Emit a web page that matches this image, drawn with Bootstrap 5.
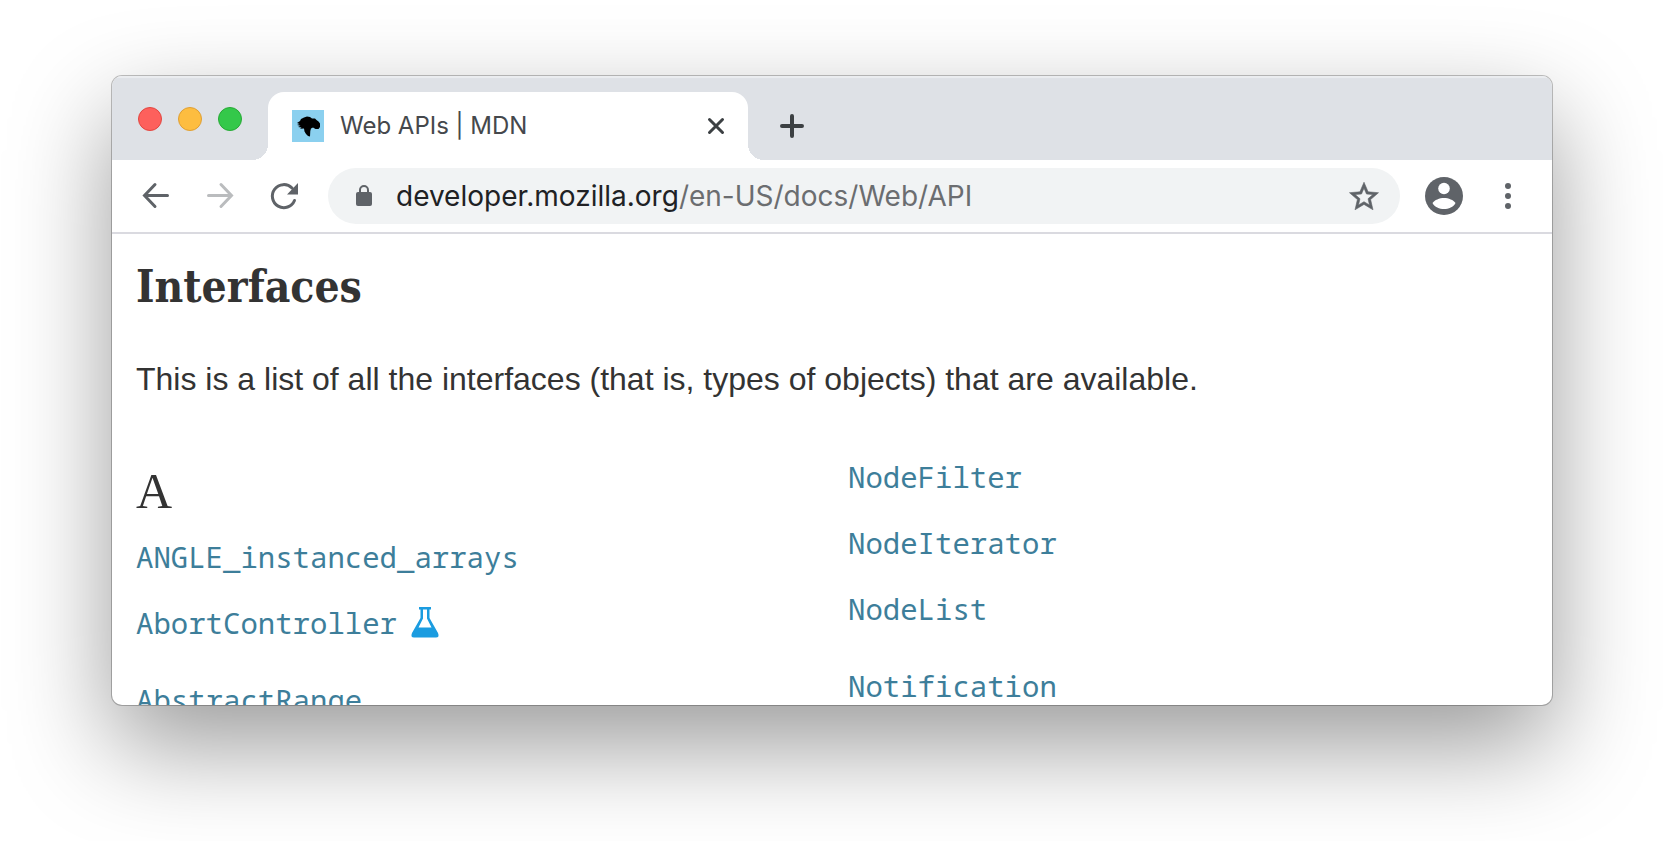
<!DOCTYPE html>
<html lang="en">
<head>
<meta charset="utf-8">
<meta name="viewport" content="width=device-width, initial-scale=1">
<title>Web APIs | MDN</title>
<link rel="stylesheet" href="https://cdn.jsdelivr.net/npm/bootstrap@5.3.0/dist/css/bootstrap.min.css">
<style>
  body { background: #fff; color: #333; }
  .browser {
    height: calc(100vh - 212px);
    margin: 76px 112px 136px;
    border-radius: 10px;
    box-shadow: 0 0 0 1px rgba(0,0,0,.24), 0 40px 100px rgba(0,0,0,.4);
  }
  .browser svg { display: block; flex: none; }

  /* Tab strip */
  .tab-strip { height: 84px; background: #dee1e6; box-shadow: inset 0 2px 1px rgba(255,255,255,.4); padding-left: 26px; }
  .lights { gap: 16px; padding-top: 31px; margin-right: 26px; }
  .light { width: 24px; height: 24px; border-radius: 50%; border: 1px solid; padding: 0; }
  .light-close { background: #fd605c; border-color: #e24640; }
  .light-min { background: #fdbd40; border-color: #df9f34; }
  .light-max { background: #34c84a; border-color: #27aa35; }
  .tab-item {
    width: 480px; margin-top: 16px; padding: 0 22px 0 24px;
    background: #fff; border-radius: 16px 16px 0 0; position: relative;
  }
  .tab-item::before, .tab-item::after {
    content: ""; position: absolute; bottom: 0; width: 16px; height: 16px;
  }
  .tab-item::before { right: 100%; background: radial-gradient(circle at 0 0, transparent 16px, #fff 16px); }
  .tab-item::after { left: 100%; background: radial-gradient(circle at 100% 0, transparent 16px, #fff 16px); }
  .tab-title { font: 24px/32px Inter, sans-serif; color: #45484c; margin-left: 16px; }
  .icon-btn { border: 0; background: none; padding: 0; color: #5f6368; display: block; }
  .new-tab { margin: 16px 0 0 28px; color: #3c4043; }

  /* Toolbar */
  .toolbar { height: 74px; border-bottom: 2px solid #dadae0; padding: 0 28px; }
  .nav-buttons { gap: 32px; margin-right: 28px; }
  .omnibox { height: 56px; border-radius: 28px; background: #f1f3f4; padding: 0 20px 0 28px; margin-right: 24px; }
  .url { font: 28px/40px Inter, sans-serif; color: #202124; }
  .url-path { border: 0; outline: 0; padding: 0; background: none; color: #6b6d70; min-width: 0; }
  .profile { margin-right: 28px; }

  /* Page content */
  .page { padding: 23px 24px 0; }
  .page h1 { font: bold 44px/60px "DejaVu Serif Condensed", "DejaVu Serif", serif; margin-bottom: 38px; }
  .page p { font: 32px/48px "Liberation Sans", Arial, sans-serif; margin-bottom: 56px; }
  .columns { --bs-gutter-x: 32px; }
  .letter { font: 50px/60px "Liberation Serif", serif; margin: 2px 0 18px; }
  .api { font: 29px/36px "Noto Sans Mono", "Liberation Mono", monospace; margin: 0; }
  .api li { margin-bottom: 30px; }
  .api li.spaced { margin-bottom: 41px; }
  .api a { color: #3d7e9a; text-decoration: none; }
</style>
</head>
<body>
<main class="browser d-flex flex-column overflow-hidden bg-white">
  <header>
    <div class="tab-strip d-flex">
      <div class="lights d-flex">
        <button class="light light-close" aria-label="Close window"></button>
        <button class="light light-min" aria-label="Minimize window"></button>
        <button class="light light-max" aria-label="Zoom window"></button>
      </div>
      <div class="tab-item d-flex align-items-center">
        <svg width="32" height="32" viewBox="0 0 32 32" aria-hidden="true"><path fill="#8bd0ef" d="M0 0h32v32H0z"/><path d="M5 13L8 11 9 9 12 7.500 15 6.500 18 7 20 8.500 23 8.500 24.500 10 26.500 11.500 28 13.500 28 17 26.500 19 23.500 19 21 17.500 19 18.500 18.300 21 18 26.500 16 26 14 24 12.500 21.500 12 18.500 8 18.800 9.500 17.500 6 17 8.500 15.700 5 15 7.500 14z"/></svg>
        <span class="tab-title flex-grow-1">Web APIs | MDN</span>
        <button class="icon-btn" aria-label="Close tab"><svg width="20" height="20" viewBox="0 0 20 20" fill="none" stroke="#3c4043" stroke-width="3" stroke-linecap="round"><path d="M3.500 3.500l13 13M16.500 3.500l-13 13"/></svg></button>
      </div>
      <button class="icon-btn new-tab" aria-label="New tab"><svg width="32" height="24" viewBox="0 0 32 24" fill="none" stroke="currentColor" stroke-width="4" stroke-linecap="round"><path d="M16 2v20M6 12h20"/></svg></button>
    </div>
    <div class="toolbar d-flex align-items-center">
      <div class="nav-buttons d-flex">
        <button class="icon-btn" aria-label="Back"><svg width="32" height="32" viewBox="0 0 32 32" fill="none" stroke="currentColor" stroke-width="3" stroke-linecap="round"><path d="M27.500 15.500H5M15 4.500L4.500 15.500l10.500 11"/></svg></button>
        <button class="icon-btn" aria-label="Forward"><svg width="32" height="32" viewBox="0 0 32 32" fill="none" stroke="#babcbe" stroke-width="3" stroke-linecap="round"><path d="M4.500 15.500H27M17 4.500l10.500 11-10.500 11"/></svg></button>
        <button class="icon-btn" aria-label="Reload"><svg width="32" height="32" viewBox="0 0 32 32" fill="none" stroke="currentColor" stroke-width="3"><path stroke-linecap="round" d="M26.500 20.500A11.500 11.500 0 1 1 24 8"/><path fill="currentColor" stroke="none" d="M30 3v11.500H19z"/></svg></button>
      </div>
      <div class="omnibox d-flex align-items-center flex-grow-1">
        <svg class="me-4" width="16" height="22" viewBox="0 0 16 22" aria-hidden="true"><rect y="7" width="16" height="14" rx="2" fill="#5f6368"/><path d="M4 8V5a4 4 0 0 1 8 0v3" fill="none" stroke="#5f6368" stroke-width="2"/></svg>
        <label class="url" for="address">developer.mozilla.org</label>
        <input class="url url-path flex-grow-1" id="address" type="text" value="/en-US/docs/Web/API" spellcheck="false">
        <button class="icon-btn" aria-label="Bookmark this page"><svg width="32" height="32" viewBox="1 .5 22 22" fill="currentColor" stroke="currentColor" stroke-width=".4"><path d="M22 9.240l-7.190-.620L12 2 9.190 8.630 2 9.240l5.460 4.730L5.820 21 12 17.270 18.180 21l-1.630-7.030L22 9.240zM12 15.400l-3.760 2.270 1-4.280-3.320-2.880 4.380-.380L12 6.100l1.710 4.040 4.380.380-3.320 2.880 1 4.280L12 15.400z"/></svg></button>
      </div>
      <button class="icon-btn profile" aria-label="Profile"><svg width="40" height="40" viewBox="0 0 40 40"><circle cx="20" cy="20" r="19" fill="currentColor"/><circle cx="20" cy="12.500" r="5.800" fill="#fff"/><path fill="#fff" d="M8.500 27c2-3 7-5 11.500-5s9.500 2 11.500 5c-2 4-7 6-11.500 6s-9.500-2-11.500-6z"/></svg></button>
      <button class="icon-btn" aria-label="Menu"><svg width="32" height="32" viewBox="0 0 32 32" fill="currentColor"><circle cx="16" cy="6" r="3"/><circle cx="16" cy="16" r="3"/><circle cx="16" cy="26" r="3"/></svg></button>
    </div>
  </header>
  <section class="page">
    <h1>Interfaces</h1>
    <p>This is a list of all the interfaces (that is, types of objects) that are available.</p>
    <div class="row columns">
      <div class="col-6">
        <h2 class="letter">A</h2>
        <ul class="api list-unstyled">
          <li><a href="#">ANGLE_instanced_arrays</a></li>
          <li class="spaced d-flex align-items-center gap-2"><a href="#">AbortController</a>
            <svg class="ms-1" width="32" height="32" viewBox="-1 1 32 32" role="img" aria-label="Experimental"><path fill="#1b9ce0" d="M9 1h12v2.500h-1.500V12l8.500 15c1.200 3 .5 4.500-2 4.500H4c-2.500 0-3.200-1.500-2-4.500l8.500-15V3.500H9zM13 3.500v9L8.500 21.500h13L17 12.500v-9z" fill-rule="evenodd"/></svg></li>
          <li><a href="#">AbstractRange</a></li>
        </ul>
      </div>
      <div class="col-6">
        <ul class="api list-unstyled">
          <li><a href="#">NodeFilter</a></li>
          <li><a href="#">NodeIterator</a></li>
          <li class="spaced"><a href="#">NodeList</a></li>
          <li><a href="#">Notification</a></li>
        </ul>
      </div>
    </div>
  </section>
</main>
<script src="https://cdn.jsdelivr.net/npm/bootstrap@5.3.0/dist/js/bootstrap.bundle.min.js"></script>
</body>
</html>
